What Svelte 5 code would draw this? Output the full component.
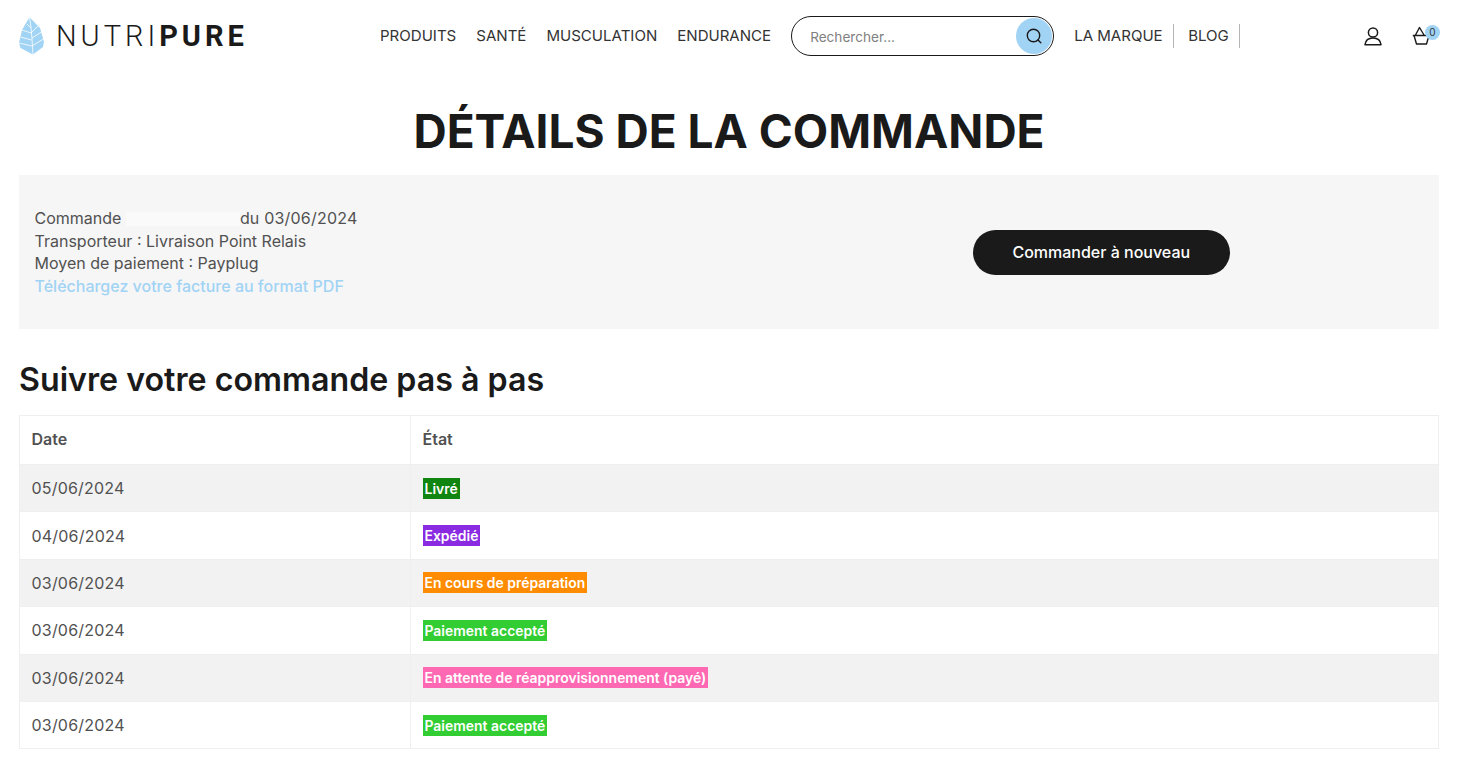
<script>
  const mainLinks = ['PRODUITS', 'SANTÉ', 'MUSCULATION', 'ENDURANCE'];
  const history = [
    { date: '05/06/2024', label: 'Livré', color: '#108510' },
    { date: '04/06/2024', label: 'Expédié', color: '#8a2be2' },
    { date: '03/06/2024', label: 'En cours de préparation', color: '#ff8c00' },
    { date: '03/06/2024', label: 'Paiement accepté', color: '#32cd32' },
    { date: '03/06/2024', label: 'En attente de réapprovisionnement (payé)', color: '#ff69b4' },
    { date: '03/06/2024', label: 'Paiement accepté', color: '#32cd32' }
  ];
</script>

<header class="header">
  <a class="logo" href="#top">
    <svg width="26" height="38" viewBox="0 0 26 38">
      <path d="M10.5 0.3 L21 11 L25 25 L24 30 L14 37.5 L1.5 31 L0 26 L3 13 Z" fill="#a1d3f5" />
      <path d="M10.5 0.3 L12 10 L13 22 L14 37.5 M3 13 L12 16 L19 9 M0 26 L13 29 L24.5 22 M13 21 L22.5 15 M1.5 20 L12.5 23 M8 7 L12 11" fill="none" stroke="#fff" stroke-width="0.8" />
    </svg>
    <span class="wordmark">NUTRI<b>PURE</b></span>
  </a>

  <nav class="main-nav">
    {#each mainLinks as link}
      <a href="#top">{link}</a>
    {/each}
  </nav>

  <div class="search">
    <input type="text" placeholder="Rechercher..." />
    <button class="search-btn" aria-label="Rechercher">
      <svg width="18" height="18" viewBox="0 0 18 18" fill="none" stroke="#1a1a1a" stroke-width="1.4">
        <circle cx="8.5" cy="8.5" r="6.2" />
        <path d="M13 13 L15.8 15.8" stroke-linecap="round" />
      </svg>
    </button>
  </div>

  <nav class="side-nav">
    <a href="#top">LA MARQUE</a>
    <a href="#top">BLOG</a>
  </nav>

  <div class="icons">
    <svg class="user" width="20" height="20" viewBox="0 0 20 20" fill="none" stroke="#1a1a1a" stroke-width="1.5">
      <circle cx="10" cy="6.5" r="4.6" />
      <path d="M2 18.7 C2.5 14.5 5.5 12 10 12 C14.5 12 17.5 14.5 18 18.7 Z" stroke-linejoin="round" />
    </svg>
    <div class="cart">
      <svg width="20" height="20" viewBox="0 0 20 20" fill="none" stroke="#1a1a1a" stroke-width="1.4">
        <path d="M0.8 9.5 H17.5 M2 9.5 L4.5 18 H14.5 L17 9.5 M3.5 9 L7.5 1.5 L12 9" stroke-linejoin="round" />
      </svg>
      <span class="badge">0</span>
    </div>
  </div>
</header>

<main class="page">
  <h1>DÉTAILS DE LA COMMANDE</h1>

  <section class="summary">
    <div class="summary-text">
      <div>Commande <span class="hidden-ref"></span><span class="digits">du 03/06/2024</span></div>
      <div>Transporteur : Livraison Point Relais</div>
      <div>Moyen de paiement : Payplug</div>
      <a href="#top">Téléchargez votre facture au format PDF</a>
    </div>
    <div class="summary-action">
      <button class="reorder">Commander à nouveau</button>
    </div>
  </section>

  <h2>Suivre votre commande pas à pas</h2>

  <table>
    <thead>
      <tr>
        <th class="col-date">Date</th>
        <th>État</th>
      </tr>
    </thead>
    <tbody>
      {#each history as row}
        <tr>
          <td class="digits">{row.date}</td>
          <td><span class="status" style="background: {row.color}">{row.label}</span></td>
        </tr>
      {/each}
    </tbody>
  </table>
</main>

<style>
  :global(body) {
    margin: 0;
    font-family: Inter, "Liberation Sans", sans-serif;
    color: #515151;
    background: #fff;
  }

  a {
    text-decoration: none;
    color: inherit;
  }

  .header {
    display: flex;
    align-items: center;
    height: 72px;
    padding: 0 19px;
  }

  .logo {
    display: flex;
    align-items: center;
    gap: 11px;
    width: 361px;
  }

  .wordmark {
    font-family: Roboto, sans-serif;
    font-size: 29px;
    font-weight: 300;
    letter-spacing: 4px;
    color: #1a1a1a;
  }

  .wordmark b {
    font-weight: 700;
  }

  .main-nav {
    display: flex;
    gap: 20px;
    padding-bottom: 2px;
    font-size: 15.05px;
    color: #333;
  }

  .search {
    display: flex;
    align-items: center;
    justify-content: space-between;
    width: 263px;
    height: 40px;
    box-sizing: border-box;
    margin: 0 20px;
    padding: 0 1px 0 16px;
    border: 1px solid #1a1a1a;
    border-radius: 20px;
  }

  .search input {
    flex: 1;
    min-width: 0;
    padding: 2px 0 0 2px;
    border: none;
    outline: none;
    background: none;
    font-family: inherit;
    font-size: 13.6px;
  }

  .search input::placeholder {
    color: #808080;
  }

  .search-btn {
    display: flex;
    align-items: center;
    justify-content: center;
    flex: none;
    width: 36px;
    height: 36px;
    padding: 0;
    border: none;
    border-radius: 50%;
    background: #a1d3f5;
  }

  .side-nav {
    display: flex;
    font-size: 15.05px;
    color: #333;
  }

  .side-nav a {
    padding-right: 10.5px;
    padding-bottom: 1px;
    margin-right: 14px;
    line-height: 23px;
    border-right: 1px solid #b5b5b5;
  }

  .side-nav a:last-child {
    margin-right: 0;
  }

  .icons {
    display: flex;
    align-items: center;
    gap: 29px;
    margin-left: auto;
    padding-right: 17px;
  }

  .cart {
    position: relative;
    display: flex;
  }

  .badge {
    position: absolute;
    top: -1px;
    right: -8px;
    width: 15px;
    height: 15px;
    border-radius: 50%;
    background: #a1d3f5;
    font-size: 10px;
    line-height: 15px;
    text-align: center;
    color: #333;
  }

  .page {
    padding: 0 29px 0 19px;
  }

  h1 {
    margin: 31px 0 16px;
    font-size: 46px;
    line-height: 56px;
    font-weight: 700;
    text-align: center;
    color: #1a1a1a;
  }

  .summary {
    display: flex;
    align-items: center;
    height: 154px;
    padding: 0 16px 0 15.5px;
    background: #f6f6f6;
    font-size: 16px;
    line-height: 22.5px;
  }

  .summary-text {
    width: 50%;
  }

  .summary-text a {
    color: #a1d3f5;
    font-weight: 500;
  }

  .hidden-ref {
    display: inline-block;
    width: 114px;
    height: 14px;
    margin-bottom: -2px;
    background: #fafafa;
  }

  .digits {
    letter-spacing: 0.2px;
  }

  .summary-action {
    flex: 1;
    padding-left: 244px;
  }

  .reorder {
    width: 257px;
    height: 45px;
    border: none;
    border-radius: 23px;
    background: #1a1a1a;
    color: #fff;
    font-family: inherit;
    font-size: 16px;
    font-weight: 500;
  }

  h2 {
    margin: 30px 0 15px;
    font-size: 32.2px;
    line-height: 41px;
    font-weight: 600;
    color: #1a1a1a;
  }

  table {
    width: 100%;
    border-collapse: collapse;
    border: 1px solid #efefef;
    font-size: 16px;
  }

  th, td {
    padding: 0 12px;
    text-align: left;
    border: 1px solid #efefef;
  }

  th {
    height: 46px;
    padding-bottom: 2px;
    font-weight: 600;
  }

  th.col-date, td.digits {
    padding-left: 11.5px;
  }

  .col-date {
    width: 366px;
  }

  td {
    height: 46.4px;
  }

  tbody tr:nth-child(odd) {
    background: #f2f2f2;
  }

  .status {
    display: inline-block;
    padding: 0 2px;
    line-height: 21px;
    font-size: 13.95px;
    font-weight: 600;
    color: #fff;
  }
</style>
